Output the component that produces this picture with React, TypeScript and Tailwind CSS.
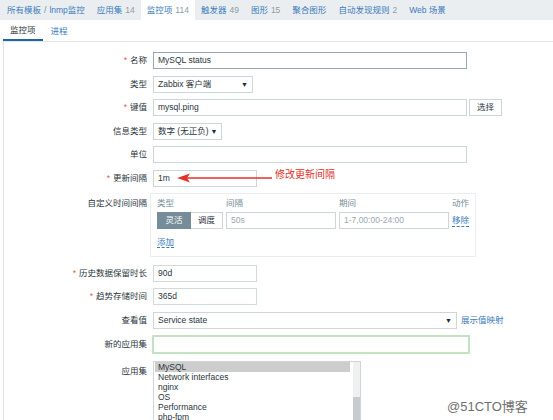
import React from 'react';

const Req = () => <span className="mr-[3px] text-[#e05a5a]">*</span>;

type RowProps = {
  label: string;
  req?: boolean;
  top?: boolean;
  children: React.ReactNode;
};

const Row = ({ label, req, top, children }: RowProps) => (
  <div className={top ? 'flex items-start' : 'flex items-center'}>
    <div className={top ? 'w-[143px] shrink-0 pt-[4px] text-right' : 'w-[143px] shrink-0 text-right'}>
      {req && <Req />}
      {label}
    </div>
    <div className="ml-[6px] flex items-center">{children}</div>
  </div>
);

const Box = ({ className, children }: { className: string; children?: React.ReactNode }) => (
  <div className={`flex h-[17px] items-center border bg-white px-[4px] ${className}`}>{children}</div>
);

const Caret = () => <span className="ml-auto pl-[2px] text-[7px] leading-none text-[#1f2c33]">▼</span>;

const tabs = [
  { name: '应用集', n: '14' },
  { name: '监控项', n: '114', active: true },
  { name: '触发器', n: '49' },
  { name: '图形', n: '15' },
  { name: '聚合图形' },
  { name: '自动发现规则', n: '2' },
  { name: 'Web 场景' },
];

const apps = ['MySQL', 'Network interfaces', 'nginx', 'OS', 'Performance', 'php-fpm'];

export default function App() {
  return (
    <div className="relative h-[420px] w-[553px] overflow-hidden whitespace-nowrap bg-white font-['Liberation_Sans','Noto_Sans_CJK_SC',sans-serif] text-[8.5px] text-[#2a353b]">
      {/* top nav */}
      <div className="flex h-[20px] items-center bg-[#ebeef0] pl-[1px]">
        <div className="flex h-full items-center px-[6px]">
          <span className="text-[#3a7bbd]">所有模板</span>
          <span className="mx-[3px] text-[#768d99]">/</span>
          <span className="text-[#3a7bbd]">lnmp监控</span>
        </div>
        {tabs.map((t) => (
          <div
            key={t.name}
            className={t.active ? 'flex h-full items-center bg-white px-[6px]' : 'flex h-full items-center px-[6px]'}
          >
            <span className="text-[#3a7bbd]">{t.name}</span>
            {t.n && <span className="ml-[3px] text-[#8d9ca5]">{t.n}</span>}
          </div>
        ))}
      </div>

      <div className="pl-[3px]">
        {/* sub tabs */}
        <div className="flex h-[22px] items-end border-b border-[#e3e7ea]">
          <div className="flex h-full items-center border-b-2 border-[#1f65a6] px-[7px] pt-[2px]">监控项</div>
          <div className="flex h-full items-center px-[8px] pt-[2px] text-[#3a7bbd]">进程</div>
        </div>

        {/* form */}
        <div className="flex h-[400px] flex-col gap-[6.5px] border-l border-[#dfe4e7] pt-[10px]">
          <Row label="名称" req>
            <Box className="w-[314px] border-[#93a9b4]">MySQL status</Box>
          </Row>
          <Row label="类型">
            <Box className="w-[100px] border-[#cfd6da]">
              Zabbix 客户端
              <Caret />
            </Box>
          </Row>
          <Row label="键值" req>
            <Box className="w-[314px] border-[#cfd6da]">mysql.ping</Box>
            <div className="ml-[2px] flex h-[17px] w-[33px] items-center justify-center border border-[#cfd6da] bg-white">
              选择
            </div>
          </Row>
          <Row label="信息类型">
            <Box className="w-[69px] border-[#cfd6da]">
              数字 (无正负)
              <Caret />
            </Box>
          </Row>
          <Row label="单位">
            <Box className="w-[314px] border-[#cfd6da]" />
          </Row>
          <Row label="更新间隔" req>
            <Box className="w-[104px] border-[#cfd6da]">1m</Box>
          </Row>
          <Row label="自定义时间间隔" top>
            <div className="-ml-[3px] mb-[1px] h-[64px] w-[326px] border border-[#ebeef0] pl-[6px] pr-[6px] pt-[3px]">
              <div className="flex h-[12px] items-center text-[#768d99]">
                <div className="w-[69px]">类型</div>
                <div className="w-[113px]">间隔</div>
                <div className="w-[112px]">期间</div>
                <div className="flex-1 text-right">动作</div>
              </div>
              <div className="mt-[3px] flex items-center">
                <div className="flex h-[17px] w-[66px]">
                  <div className="flex w-[34px] items-center justify-center bg-[#768d99] text-white">灵活</div>
                  <div className="flex w-[32px] items-center justify-center border border-l-0 border-[#cfd6da]">调度</div>
                </div>
                <Box className="ml-[3px] w-[110px] border-[#cfd6da] text-[#9aa7ae]">50s</Box>
                <Box className="ml-[3px] w-[110px] border-[#cfd6da] text-[#9aa7ae]">1-7,00:00-24:00</Box>
                <span className="ml-auto border-b border-dashed border-[#3a7bbd] leading-[11px] text-[#3a7bbd]">移除</span>
              </div>
              <div className="mt-[7px]">
                <span className="border-b border-dashed border-[#3a7bbd] leading-[11px] text-[#3a7bbd]">添加</span>
              </div>
            </div>
          </Row>
          <Row label="历史数据保留时长" req>
            <Box className="w-[104px] border-[#d2dbd8]">90d</Box>
          </Row>
          <Row label="趋势存储时间" req>
            <Box className="w-[104px] border-[#d2dbd8]">365d</Box>
          </Row>
          <Row label="查看值">
            <Box className="w-[304px] border-[#cfd6da]">
              Service state
              <Caret />
            </Box>
            <span className="ml-[4px] text-[#3a7bbd]">展示值映射</span>
          </Row>
          <Row label="新的应用集">
            <div className="-ml-[1px] h-[19px] w-[318px] border-2 border-[#c2e3c2] bg-white" />
          </Row>
          <Row label="应用集" top>
            <div className="flex h-[80px] w-[208px] border border-[#cfd6da] bg-white">
              <div className="flex-1 pl-[1px] leading-[10px]">
                {apps.map((a, i) => (
                  <div key={a} className={i === 0 ? 'h-[10px] bg-[#cdcdcd] pl-[3px]' : 'h-[10px] pl-[3px]'}>
                    {a}
                  </div>
                ))}
              </div>
              <div className="ml-[3px] flex w-[7px] flex-col bg-[#f0f0f0]">
                <div className="h-[35px]" />
                <div className="flex-1 bg-[#c5cbce]" />
              </div>
            </div>
          </Row>
        </div>
      </div>

      {/* annotation */}
      <svg className="absolute left-[176px] top-[172px]" width="98" height="12" viewBox="0 0 98 12">
        <line x1="10" y1="6" x2="96" y2="6" stroke="#e4312b" strokeWidth="1.6" />
        <polygon points="1,6 14,1.5 11,6 14,10.5" fill="#e4312b" />
      </svg>
      <div className="absolute left-[275px] top-[167px] text-[10px] text-[#e4312b]">修改更新间隔</div>

      <div className="absolute left-[447px] top-[397px] text-[13px] text-[#707070] [text-shadow:0_0_2px_#fff]">
        @51CTO博客
      </div>
    </div>
  );
}
